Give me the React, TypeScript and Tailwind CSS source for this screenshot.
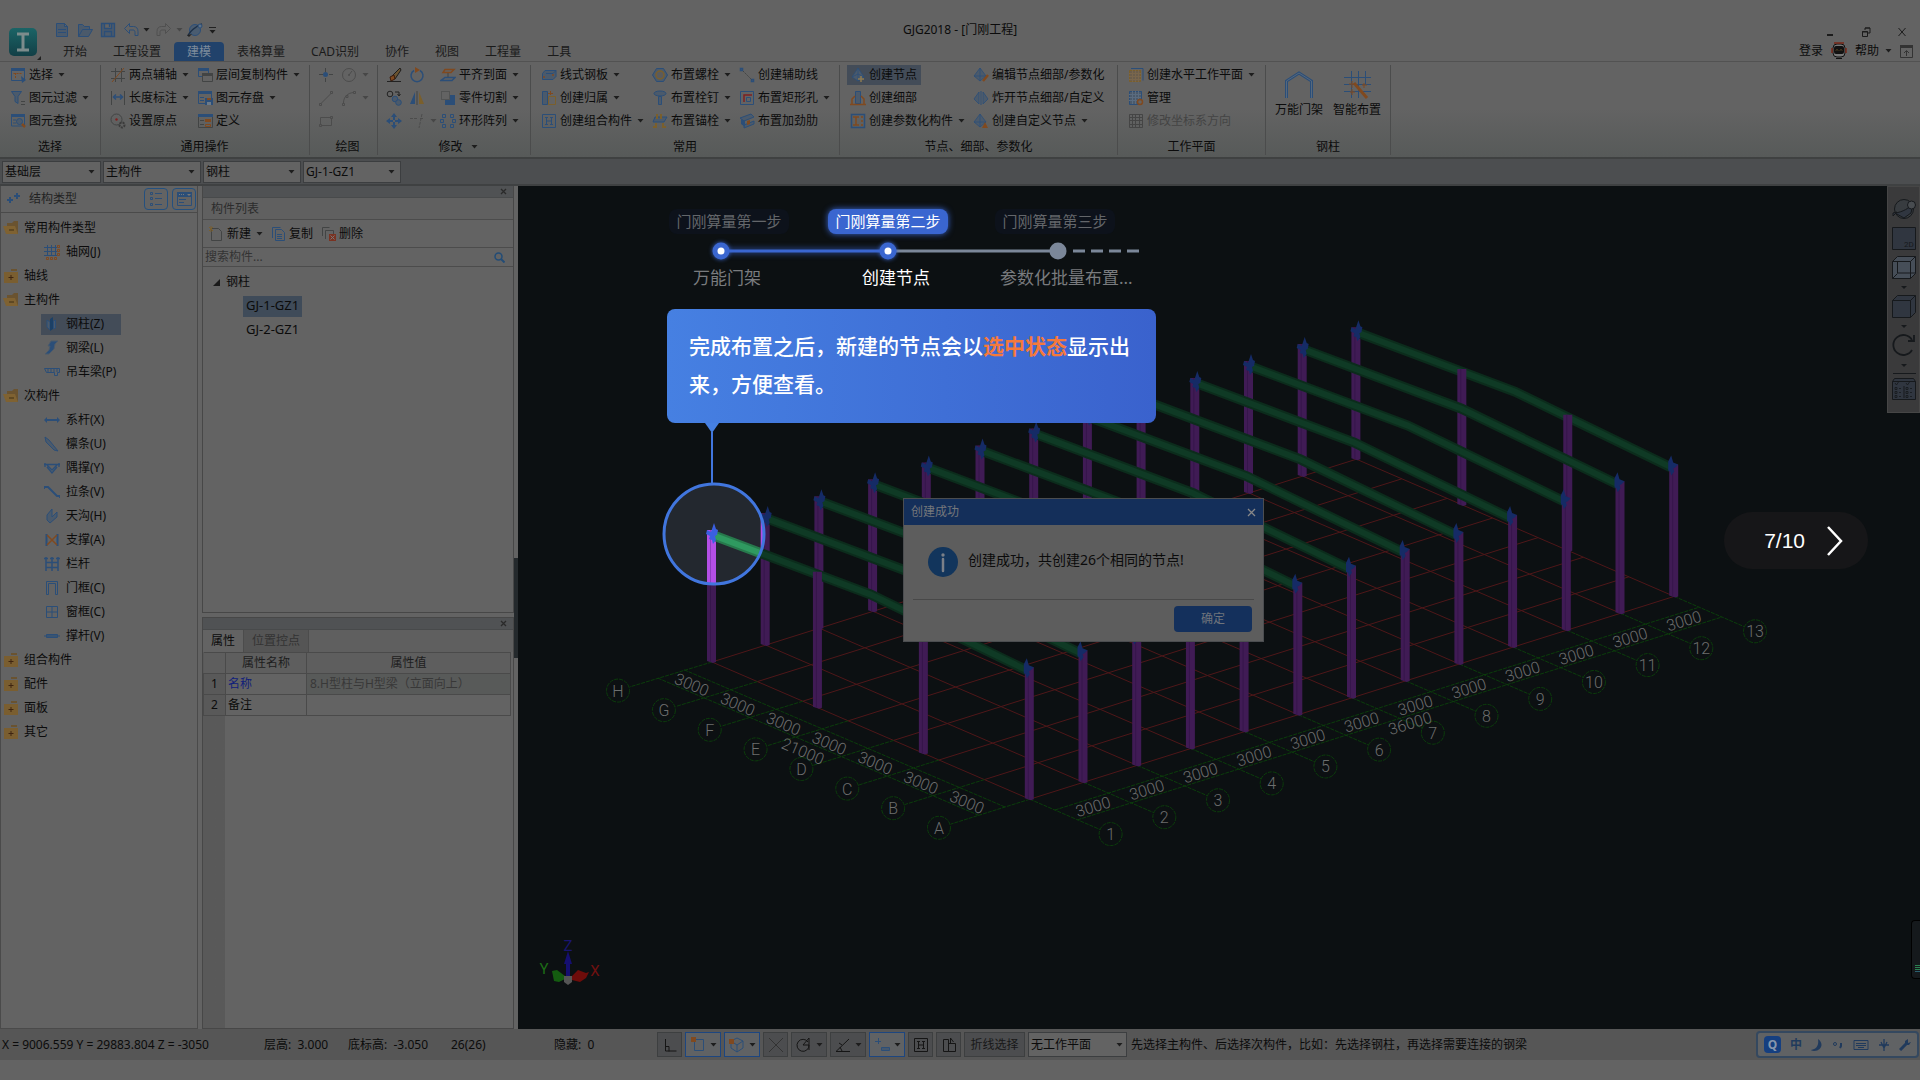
import React from "react";

const B = "#2b4e78";
const L = "#4b5a6b";
const G = "#424444";
const O = "#80491f";
const Y = "#7a5f2c";

const glyphs: Record<string, React.ReactNode> = {
  select: (<><path d="M1.5 1.5h13v12h-13z" fill="none" stroke={B} /><path d="M1 1h14v3H1z" fill={B} /><path d="M3.500 6.500h8M5.500 6v6" stroke={O} strokeDasharray="2 1" /><path d="M11 9l5 4-4 3z" fill={B} /></>),
  filter: (<><path d="M1.500 1.500h10L8 6.500v7l-3-2v-5z" fill={L} stroke={B} /><path d="M11 11.500h4M11 14.500h4" stroke={G} /></>),
  find: (<><path d="M1.500 2h13v11h-13z" fill="none" stroke={B} /><path d="M1 1h14v3H1z" fill={B} /><path d="M3 7h3M3 10h3" stroke={B} /><circle cx="9.500" cy="8.500" r="3" fill={L} stroke={B} /><path d="M12 11l3 3" stroke={O} strokeWidth="2.500" /></>),
  axis2: (<><path d="M5.500 1v14M11.500 1v14M1 4.500h14M1 11.500h14" stroke={G} /><path d="M2 15L14 1" stroke={O} /></>),
  dim: (<><path d="M1.500 1v14M14.500 1v14" stroke={G} /><path d="M3 7h10M6 4.500L3.500 7 6 9.500M10 4.500L12.500 7 10 9.500" fill="none" stroke={B} strokeWidth="1.500" /></>),
  origin: (<><circle cx="6.500" cy="6.500" r="5.500" fill="none" stroke={G} /><circle cx="6.500" cy="6.500" r="1.200" fill="#802020" /><circle cx="12" cy="12" r="2.500" fill="none" stroke="#3b3b3b" strokeWidth="2" strokeDasharray="2 1" /></>),
  layers: (<><path d="M1.500 1.500h10v8h-10z" fill="none" stroke={B} /><path d="M1 1h11v3H1z" fill={B} /><path d="M5.500 6.500h10v8h-10z" fill="#636363" stroke={G} /><path d="M5 6h11v3H5z" fill={G} /></>),
  save: (<><path d="M1.500 1.500h13v12h-13z" fill="none" stroke={B} /><path d="M1 1h14v3H1z" fill={B} /><path d="M3 7.500h4M3 10.500h4" stroke={B} /><path d="M8 8h8v7H8z" fill={B} /><path d="M10 8h4v2h-4z" fill={O} /><path d="M10 12h4v3h-4z" fill="#6d7a88" /></>),
  define: (<><path d="M1.500 1.500h14v13h-14z" fill="none" stroke={G} /><path d="M1 1h15v3H1z" fill={B} /><path d="M3 7.500h4M3 11.500h4" stroke={G} /><path d="M8 6h6v3H8z" fill={O} /><path d="M8.500 11.500h5v2h-5z" fill="none" stroke={O} /></>),
  point: (<><path d="M7.500 1v4M7.500 11v4M1 7.500h4M11 7.500h4" stroke={G} /><circle cx="7.500" cy="7.500" r="2.500" fill={B} /></>),
  circle: (<><circle cx="8" cy="8" r="6.500" fill="none" stroke="#4c4c4c" /><circle cx="8" cy="8" r="1" fill="#4c4c4c" /><path d="M8 8l3-4" stroke="#4c4c4c" /></>),
  line: (<path d="M1.500 13.500h2v2h-2zM12.500 1.500h2v2h-2zM3.500 13L13 3.500" fill="none" stroke="#4c4c4c" />),
  arc: (<path d="M1.500 13.500h2v2h-2zM12.500 1.500h2v2h-2zM5 5.500h2v2H5zM2.500 13c0-6 4-10 10-10.500" fill="none" stroke="#4c4c4c" />),
  rect: (<><path d="M2.500 4.500h11v8h-11z" fill="none" stroke="#4c4c4c" /><path d="M1.500 11.500h2v2h-2zM12.500 3.500h2v2h-2z" fill="#5c5c5c" stroke="#4c4c4c" /></>),
  eraser: (<><path d="M1 14.500h14" stroke="#222" /><path d="M6 9l8-8 1 2-6 9z" fill="#6a5330" stroke="#1c1c1c" /><path d="M4 10l4-2 1 4-4 2z" fill={O} stroke="#3b1c0c" /></>),
  rotate: (<><path d="M5 3.500a6 6 0 1 0 6 0" fill="none" stroke={B} strokeWidth="1.500" /><path d="M6 0l5 3-5 3z" fill={O} /></>),
  copy: (<><circle cx="4" cy="4" r="2.800" fill="none" stroke="#222" /><path d="M9 2h4v3M11.500 4l1.500 2 1.500-2" fill="none" stroke="#222" /><circle cx="9" cy="9" r="2.800" fill={L} stroke={B} /><circle cx="12.500" cy="12.500" r="2.800" fill={L} stroke={B} /></>),
  mirror: (<><path d="M6 2v12H1z" fill={B} /><path d="M10 2v12h5z" fill={Y} /><path d="M8 1v14" stroke={G} /></>),
  move: (<path d="M8 0l3 4H9v3H7V4H5zM8 16l3-4H9V9H7v3H5zM0 8l4-3v2h3v2H4v2zM16 8l-4-3v2H9v2h3v2z" fill={B} />),
  trim: (<path d="M1 5.500h8M11 5.500h4M13 1l-3 14" fill="none" stroke="#4c4c4c" strokeDasharray="3 1" />),
  align: (<><path d="M5 2.500h9l-3 3H3z" fill="none" stroke={O} strokeWidth="1.500" /><path d="M5 10.500h10l-3 3H1z" fill="none" stroke={B} strokeWidth="1.500" /><path d="M8 6v4" stroke={G} /></>),
  cut: (<><path d="M1.500 1.500h8v8h-8z" fill="none" stroke={G} strokeDasharray="1 1" /><path d="M10 5h5v10H5v-5h5z" fill={B} /></>),
  ring: (<path d="M2.500 1.500h3v3h-3zM10.500 1.500h3v3h-3zM.5 6.500h3v3h-3zM12.500 6.500h3v3h-3zM2.500 11.500h3v3h-3zM10.500 11.500h3v3h-3z" fill="none" stroke={B} />),
  plate: (<><path d="M4 3.500h11v6l-3 3H1.500v-6z" fill={L} stroke={B} /><path d="M5 6.500h7l3-3" fill="none" stroke={B} /><circle cx="3" cy="10" r="1" fill={O} /><circle cx="12" cy="8" r="1" fill={O} /></>),
  belong: (<><path d="M1.500 1.500h5v13h-5z" fill={L} stroke={B} /><path d="M7.500 6.500h7v8h-7z" fill="none" stroke={Y} /><path d="M9.500 1v4M12 3.500H7" stroke={O} /></>),
  combo: (<><path d="M1.500 1.500h13v13h-13z" fill="none" stroke={B} /><path d="M4 4.500h3M9 4.500h3M4 11.500h3M9 11.500h3M5.500 4v8M10.500 4v8M5 8h6" stroke={B} /></>),
  bolt: (<><path d="M4.500 1.500h7l4 6.500-4 6.500h-7L.5 8z" fill={L} stroke={B} /><circle cx="8" cy="8" r="4" fill="#5b5b5b" stroke={Y} strokeWidth="1.500" /></>),
  stud: (<><ellipse cx="8" cy="3.500" rx="6" ry="2.500" fill={L} stroke={B} /><path d="M6.500 6.500h3v8h-3z" fill={L} stroke={B} /></>),
  anchor: (<><path d="M3 4h12l-3 5H1z" fill={L} stroke={B} /><path d="M5 1v5M9 1v5M4 10v4H1M11 10v4h3" fill="none" stroke={Y} strokeWidth="2" /></>),
  aux: (<><path d="M1.500 1.500h2v2h-2zM12.500 12.500h2v2h-2z" fill="none" stroke={B} strokeWidth="1.500" /><path d="M4 4l9 9" stroke={G} strokeDasharray="2 1" /></>),
  hole: (<><path d="M1.500 1.500h13v13h-13z" fill="none" stroke={B} /><path d="M5 12V5h8" fill="none" stroke="#802020" strokeWidth="1.500" /><path d="M7.500 7.500h4v4h-4z" fill="none" stroke={B} /></>),
  rib: (<><path d="M1 5l11-4 3 3-10 4zM5 12l10-4v3L5 15z" fill={L} stroke={B} /><path d="M2 6v5l4 3V8z" fill={B} /><path d="M8 8l3-1v4l-3 1z" fill={O} /></>),
  node: (<><path d="M8 1l6 9-6 4-6-4z" fill={L} stroke={B} strokeWidth=".8" /><path d="M8 1v13M2 10l6-3 6 3" fill="none" stroke={B} strokeWidth=".8" /><path d="M11 9v6M8 12h6" stroke="#8c7a52" strokeWidth="1.500" /></>),
  detail: (<><path d="M5.500 1.500h5v12h-5z" fill={L} stroke={B} /><path d="M0 14.500h16M2 14V9l3-3M14 14V9l-3-3" fill="none" stroke={O} strokeWidth="1.500" /></>),
  param: (<><path d="M1.500 1.500h13v13h-13z" fill="none" stroke={B} strokeWidth="1.500" /><path d="M3 4h6M3 12h6M6 4v8M11 4h2M11 8h2M11 12h2" stroke={O} strokeWidth="1.500" /></>),
  nodeEdit: (<><path d="M7 1l6 8-6 5-6-5z" fill={L} stroke={B} strokeWidth=".8" /><path d="M7 1v13M1 9h12" stroke={B} strokeWidth=".8" /><path d="M10 14l5-6" stroke={O} strokeWidth="2.500" /></>),
  nodeBlast: (<><path d="M6 2v12L1 9zM10 2v12l5-5z" fill={L} stroke={B} strokeWidth=".8" /><path d="M8 1v14" stroke={B} /></>),
  nodeCustom: (<><path d="M7 1l6 8-6 5-6-5z" fill={L} stroke={B} strokeWidth=".8" /><path d="M7 1v13M1 9h12" stroke={B} strokeWidth=".8" /><path d="M9 15l3-6 3 6z" fill={O} /></>),
  plane: (<><path d="M3 1.500h12v12" fill="none" stroke={B} /><path d="M1.500 3.500h11v11h-11z" fill="#6a5d4c" stroke={Y} /><path d="M4.500 3v12M7.500 3v12M10.500 3v12M1 6.500h12M1 9.500h12M1 12.500h12" stroke="#79664c" /></>),
  manage: (<><path d="M1.500 1.500h12v13h-12z" fill={L} stroke={B} /><path d="M4.500 1v13M7.500 1v13M10.500 1v13M1 4.500h12M1 7.500h12M1 10.500h12" stroke="#5a6c80" /><circle cx="12" cy="12" r="2.500" fill="#636363" stroke={O} strokeWidth="1.500" /></>),
  grid: (<path d="M1.500 1.500h13v13h-13zM4.500 1v14M7.500 1v14M11.500 1v14M1 4.500h14M1 7.500h14M1 11.500h14" fill="none" stroke="#454545" />),
  new: (<><path d="M2.500 1.500h8l3 3v10h-11zM10.500 1.500v3h3" fill={L} stroke={B} /><path d="M4 7.500h8M4 10.500h8" stroke={B} /></>),
  open: (<path d="M1.500 14.500v-12h4l2 2h5v3M1.500 14.500l4-7h10l-4 7z" fill={L} stroke={B} />),
  disk: (<path d="M1.500 1.500h13v13h-13zM4.500 1.500v5h7v-5M4.500 14.500v-5h7v5M9.500 2v3" fill={L} stroke={B} strokeWidth="1.300" />),
  undo: (<path d="M1.500 6.500l5-5v3h4c3 0 4.500 2 4.500 5v4h-3v-3c0-1.500-.5-2.500-2-2.500H6.500v3.500z" fill="none" stroke={B} />),
  redo: (<path d="M14.500 6.500l-5-5v3h-4c-3 0-4.500 2-4.500 5v4h3v-3c0-1.500.5-2.500 2-2.500h3.500v3.500z" fill="none" stroke="#505050" />),
  planet: (<><circle cx="8" cy="8" r="5.500" fill="#4a5c70" stroke={B} /><path d="M1 14c1-4 8-10 14-12" fill="none" stroke="#1d3048" strokeWidth="1.500" /><circle cx="13" cy="4" r="2" fill="#5f7185" stroke={B} /><path d="M0 13l5-1-3 3z" fill="#222" /></>),
  folderOpen: (<><path d="M4 3h5l2-2h4v13H4z" fill="#6a5330" /><path d="M0 6h12l3 8H3z" fill="#7f6232" /><path d="M6 10h5" stroke="#3f2f14" /></>),
  folder: (<><path d="M8 1h6v2H8z" fill="#6a5330" /><path d="M1 4h14v11H1z" fill="#7a5e30" /><path d="M5.500 9.500h5M8 7v5" stroke="#3f2410" /></>),
  axes: (<><path d="M3.500 1v11M7.500 1v11M11.500 1v11M0 3.500h13M0 7.500h13M0 11.500h13" stroke={B} /><path d="M13.500 1.500h2v2h-2zM13.500 5.500h2v2h-2zM13.500 9.500h2v2h-2zM2.500 13.500h2v2h-2zM6.500 13.500h2v2h-2zM10.500 13.500h2v2h-2z" fill="none" stroke={O} /></>),
  column: (<><path d="M3 4l3 2v8l-3-3z" fill={L} stroke={B} /><path d="M6 3l3-2v12l-3 2z" fill="#1c4066" /><path d="M9.500 5l2-1v8l-2 1z" fill={L} stroke={B} /></>),
  beam: (<path d="M7 1h7l-3 3-1 5-5 5H1l4-4 1-4H4z" fill={B} stroke={L} />),
  crane: (<path d="M.5 4.500h15v4h-2v3h-3v-3h-8zM4 5v3M7 5v3M10 5v3M13 5v3" fill="none" stroke={B} />),
  tie: (<path d="M0 8l3-3v2h10V5l3 3-3 3V9H3v2z" fill={B} />),
  purlin: (<path d="M1 1l4 3 9 11-4-1L2 6z" fill={L} stroke={B} />),
  knee: (<path d="M0 4.500h16M1 3v4M15 3v4M3 5l5 5 5-5M3 7l5 6 5-6" fill="none" stroke={B} strokeWidth="1.300" />),
  rod: (<path d="M0 3h4l9 9h3M0 2v3M16 11v3" fill="none" stroke={B} strokeWidth="2" />),
  gutter: (<path d="M3 7l5-6v8l5-5v5l-7 6-3-3z" fill={L} stroke={B} />),
  brace: (<><path d="M2.500 2v12M13.500 2v12" stroke={B} strokeWidth="2" /><path d="M3 3l10 10M13 3L3 13" stroke={O} strokeWidth="1.500" /></>),
  fence: (<path d="M2 1v14M8 1v14M14 1v14M0 2.500h4M6 2.500h4M12 2.500h4M2 6.500h12M2 11.500h12" stroke={B} strokeWidth="1.500" />),
  door: (<path d="M2.500 14.500v-13h11v13h-2v-11h-7v11z" fill="none" stroke={B} />),
  window: (<path d="M2.500 2.500h11v11h-11zM8 2v12M2 8h12" fill="none" stroke={B} />),
  strut: (<path d="M0 8h16M2.500 6.500h11v3h-11z" fill={L} stroke={B} />),
  doc: (<><path d="M3.500 2.500h7l3 3v9h-10z" fill="none" stroke={G} /><path d="M1 1l4 4M5 1L1 5M3 0v6" stroke={Y} /></>),
  docs: (<><path d="M1.500 12V1.500h8" fill="none" stroke={B} /><path d="M4.500 3.500h6l3 3v8h-9zM6 8.500h5M6 10.500h5M6 12.500h5" fill="none" stroke={B} /></>),
  docDel: (<><path d="M1.500 10V1.500h7M4.500 13V4.500h8V8" fill="none" stroke={G} /><path d="M8 8h7v7H8z" fill="#7a3322" /><path d="M9.500 9.500l4 4M13.500 9.500l-4 4" stroke="#777" /></>),
};

function Icon({ name, size = "size-4" }: { name: string; size?: string }) {
  return (
    <svg viewBox="0 0 16 16" className={`${size} shrink-0`} aria-hidden="true">
      {glyphs[name]}
    </svg>
  );
}

function Caret({ dim = false }: { dim?: boolean }) {
  return (
    <svg viewBox="0 0 7 4" className={`h-1 w-[7px] shrink-0 ${dim ? "text-[#474747]" : "text-[#1d1d1d]"}`} aria-hidden="true">
      <path d="M.5 0h6l-3 3.500z" fill="currentColor" />
    </svg>
  );
}

type Tool = { icon: string; text?: string; caret?: boolean; active?: boolean; off?: boolean };

function ToolButton({ t }: { t: Tool }) {
  return (
    <button
      type="button"
      aria-label={t.text ?? t.icon}
      className={`-ml-[3px] flex h-5 items-center whitespace-nowrap pl-[3px] pr-1 ${t.active ? "bg-[#434c58]" : ""} ${t.off ? "text-[#444]" : ""}`}
    >
      <Icon name={t.icon} />
      {t.text && <span className="ml-[3px]">{t.text}</span>}
      {t.caret && <span className="-mr-1 ml-[5px] flex"><Caret dim={!t.text} /></span>}
    </button>
  );
}

type GroupProps = { label: string; columns: Tool[][]; caret?: boolean; className?: string; gap?: string };

function Group({ label, columns, caret, className = "px-2.5", gap = "gap-2" }: GroupProps) {
  return (
    <section className={`flex shrink-0 flex-col border-r border-[#4b4c4c] ${className}`}>
      <div className={`flex ${gap}`}>
        {columns.map((c, i) => (
          <div key={i} className="flex flex-col items-start gap-[3px]">
            {c.map((t, j) => <ToolButton key={j} t={t} />)}
          </div>
        ))}
      </div>
      <h2 className="mt-auto flex items-center justify-center gap-2">{label}{caret && <Caret />}</h2>
    </section>
  );
}

const T = (icon: string, text?: string, caret?: boolean): Tool => ({ icon, text, caret });

const leftGroups: GroupProps[] = [
  { label: "选择", className: "w-[101px] px-2.5", columns: [[T("select", "选择", true), T("filter", "图元过滤", true), T("find", "图元查找")]] },
  { label: "通用操作", className: "w-[209px] pl-[9px] pr-2.5", columns: [[T("axis2", "两点辅轴", true), T("dim", "长度标注", true), T("origin", "设置原点")], [T("layers", "层间复制构件", true), T("save", "图元存盘", true), T("define", "定义")]] },
  { label: "绘图", className: "w-[68px] pl-2", gap: "gap-[3px]", columns: [[T("point"), T("line"), T("rect")], [T("circle", undefined, true), T("arc", undefined, true)]] },
  { label: "修改", className: "w-[153px] pl-2", gap: "gap-[3px]", caret: true, columns: [[T("eraser"), T("copy"), T("move")], [T("rotate"), T("mirror"), T("trim", undefined, true)], [T("align", "平齐到面", true), T("cut", "零件切割", true), T("ring", "环形阵列", true)]] },
  { label: "常用", className: "w-[309px] px-2.5", columns: [[T("plate", "线式钢板", true), T("belong", "创建归属", true), T("combo", "创建组合构件", true)], [T("bolt", "布置螺栓", true), T("stud", "布置栓钉", true), T("anchor", "布置锚栓", true)], [T("aux", "创建辅助线"), T("hole", "布置矩形孔", true), T("rib", "布置加劲肋")]] },
  { label: "节点、细部、参数化", className: "w-[278px] px-2.5", columns: [[{ icon: "node", text: "创建节点", active: true }, T("detail", "创建细部"), T("param", "创建参数化构件", true)], [T("nodeEdit", "编辑节点细部/参数化"), T("nodeBlast", "炸开节点细部/自定义"), T("nodeCustom", "创建自定义节点", true)]] },
  { label: "工作平面", className: "w-[148px] px-2.5", columns: [[T("plane", "创建水平工作平面", true), T("manage", "管理"), { icon: "grid", text: "修改坐标系方向", off: true }]] },
];

const tabs = ["开始", "工程设置", "建模", "表格算量", "CAD识别", "协作", "视图", "工程量", "工具"];

function Header() {
  return (
    <header className="grid grid-cols-[50px_1fr] grid-rows-[42px_19px] border-b border-[#525252]">
      <div className="row-span-2 flex items-end pl-2">
        <svg viewBox="0 0 34 34" className="size-[34px]" aria-label="GJG">
          <defs><linearGradient id="lg" x2="0" y2="1"><stop stopColor="#1b6466" /><stop offset="1" stopColor="#123f46" /></linearGradient></defs>
          <rect x="1" y="1" width="28" height="28" rx="5" fill="url(#lg)" />
          <path d="M9 7h12M9 23h12M15 7v16" stroke="#7c8c8c" strokeWidth="3" />
          <path d="M33 29v4h-4z" fill="#222" />
        </svg>
      </div>
      <div className="grid grid-cols-[1fr_auto_1fr] items-end pb-1">
        <nav className="flex items-center gap-[7px] pl-[4px]" aria-label="快速访问">
          <Icon name="new" /><Icon name="open" /><Icon name="disk" />
          <span className="flex items-center gap-1"><Icon name="undo" /><Caret /></span>
          <span className="-ml-px flex items-center gap-1"><Icon name="redo" /><Caret dim /></span>
          <span className="-ml-[3px] flex items-center gap-1.5"><Icon name="planet" /><span className="border-t border-[#222] pt-0.5"><Caret /></span></span>
        </nav>
        <h1 className="mr-[50px] text-[12px] leading-4">GJG2018 - [门刚工程]</h1>
        <div className="flex items-center justify-end gap-6 pr-3 text-[#1c1c1c]">
          <button type="button" aria-label="最小化" className="flex h-3 w-3 items-center justify-center pt-1.5"><span className="h-0.5 w-1.5 bg-[#1c1c1c]" /></button>
          <button type="button" aria-label="还原"><svg viewBox="0 0 12 12" className="size-3"><path d="M2.500 5.500h5v5h-5zM5 4V2h5v5H8M2 6h6M5 2h5" fill="none" stroke="currentColor" /></svg></button>
          <button type="button" aria-label="关闭"><svg viewBox="0 0 12 12" className="size-3"><path d="M2.500 2l7 8M9.500 2l-7 8" stroke="currentColor" /></svg></button>
        </div>
      </div>
      <div className="flex items-start">
        {tabs.map((t) => (
          <button key={t} type="button" className={`h-full px-[13px] leading-[18px] ${t === "建模" ? "rounded-t-sm bg-[#21426b] text-[#7e8b9b]" : "text-[#1a1a1a]"}`}>{t}</button>
        ))}
        <div className="ml-auto flex items-center gap-2 pr-[7px] leading-[18px]">
          <button type="button">登录</button>
          <svg viewBox="0 0 16 18" className="h-[18px] w-4" aria-hidden="true">
            <rect x="2" y="2" width="12" height="13" rx="4" fill="#777" stroke="#111" /><rect x="3" y="4" width="10" height="8" rx="2" fill="#111" />
            <path d="M5 8.500l1-1 1 1M9 8.500l1-1 1 1" fill="none" stroke={Y} /><path d="M3 1h10M1 6v5M15 6v5" stroke="#7a2818" strokeWidth="1.500" /><path d="M5 16.500h6" stroke="#111" />
          </svg>
          <button type="button" className="flex items-center gap-1.5">帮助<Caret /></button>
          <svg viewBox="0 0 13 13" className="size-[13px]" aria-hidden="true"><path d="M.5.5h12v12H.5zM6.500 11V6M4 8l2.500-2.500L9 8" fill="none" stroke="#333" /><path d="M0 0h13v3H0z" fill="#333" /></svg>
        </div>
      </div>
    </header>
  );
}

function Ribbon() {
  return (
    <div className="flex h-[97px] border-b-2 border-[#3f4141] bg-linear-to-b from-[#636363] from-50% to-[#575a59] pb-[2px] pt-[3px]">
      {leftGroups.map((g) => <Group key={g.label} {...g} />)}
      <section className="flex flex-col border-r border-[#4b4c4c] px-[9px]">
        <div className="flex gap-2.5 pt-[5px]">
          <button type="button" className="flex flex-col items-center">
            <svg viewBox="0 0 30 30" className="size-[30px]"><path d="M2.500 28V11L15 3l12.500 8v17" fill="none" stroke={B} strokeWidth="3" /><path d="M2.500 28V11L15 3l12.500 8v17" fill="none" stroke="#56687d" /></svg>
            <span className="leading-5">万能门架</span>
          </button>
          <button type="button" className="flex flex-col items-center">
            <svg viewBox="0 0 30 30" className="size-[30px]"><path d="M9.500 1v27M16.500 1v27M23.500 1v14M2 7.500h27M2 14.500h27M2 21.500h27" stroke={B} /><path d="M12 13l13 15" stroke={O} strokeWidth="3" /><path d="M10 11v7M7 14h7M20 15h5M22 13v5M8 22h5M10 19v6" stroke={O} /></svg>
            <span className="leading-5">智能布置</span>
          </button>
        </div>
        <h2 className="mt-auto text-center">钢柱</h2>
      </section>
    </div>
  );
}

function Combo({ label, value, className = "", caretBox = "right-1.5" }: { label: string; value: string; className?: string; caretBox?: string }) {
  return (
    <span className={`relative inline-flex items-center ${className}`}>
      <select aria-label={label} defaultValue={value} className="size-full appearance-none border border-[#3c3e40] bg-[#636363] pl-0.5 text-[12px] outline-none">
        <option>{value}</option>
      </select>
      <span className={`pointer-events-none absolute ${caretBox}`}><Caret /></span>
    </span>
  );
}

type Row = { icon: string; text: string; child?: boolean; active?: boolean };
const c = (icon: string, text: string, active?: boolean): Row => ({ icon, text, child: true, active });
const typeRows: Row[] = [
  { icon: "folderOpen", text: "常用构件类型" }, c("axes", "轴网(J)"), { icon: "folder", text: "轴线" },
  { icon: "folderOpen", text: "主构件" }, c("column", "钢柱(Z)", true), c("beam", "钢梁(L)"), c("crane", "吊车梁(P)"),
  { icon: "folderOpen", text: "次构件" }, c("tie", "系杆(X)"), c("purlin", "檩条(U)"), c("knee", "隅撑(Y)"), c("rod", "拉条(V)"),
  c("gutter", "天沟(H)"), c("brace", "支撑(A)"), c("fence", "栏杆"), c("door", "门框(C)"), c("window", "窗框(C)"), c("strut", "撑杆(V)"),
  { icon: "folder", text: "组合构件" }, { icon: "folder", text: "配件" }, { icon: "folder", text: "面板" }, { icon: "folder", text: "其它" },
];

function TypePanel() {
  return (
    <aside className="flex w-[198px] shrink-0 flex-col border border-t-0 border-[#4a4a4a]">
      <div className="flex h-[27px] items-center border-b border-[#4a4a4a] pl-[6px]">
        <svg viewBox="0 0 14 14" className="size-3.5"><path d="M3 5v6M0 8h6M10 1v6M7 4h6" stroke={B} strokeWidth="2" /></svg>
        <h2 className="ml-2 text-[#222]">结构类型</h2>
        <button type="button" aria-label="列表" className="ml-auto flex h-[22px] w-6 items-center justify-center rounded-sm border border-[#24507f]">
          <svg viewBox="0 0 14 14" className="size-3.5"><path d="M1.500.5h2v2h-2zM1.500 5.500h2v2h-2zM1.500 11.500h2v2h-2zM6 1.500h7M6 6.500h7M6 12.500h7" fill="none" stroke={B} /></svg>
        </button>
        <button type="button" aria-label="面板" className="ml-1 mr-px flex h-[22px] w-6 items-center justify-center rounded-sm border border-[#24507f]">
          <svg viewBox="0 0 15 14" className="h-3.5 w-[15px]"><path d="M.5.5h14v13H.5z" fill="none" stroke={B} /><path d="M0 0h15v5H0z" fill={B} /><path d="M2 7.500h7M2 10.500h5" stroke={B} /><path d="M10 2h4l-2 2z" fill="#777" /><path d="M2 2.500h5" stroke="#777" strokeDasharray="1 1" /></svg>
        </button>
      </div>
      <ul className="pt-[3px]">
        {typeRows.map((r) => (
          <li key={r.text} className={`flex h-6 items-center ${r.child ? "pl-10" : "pl-0.5"}`}>
            <button type="button" className={`flex h-[21px] items-center ${r.child ? "w-20 gap-1.5 pl-[3px]" : "gap-[5px]"} ${r.active ? "bg-[#434c58]" : ""}`}>
              <Icon name={r.icon} />{r.text}
            </button>
          </li>
        ))}
      </ul>
    </aside>
  );
}

function Strip() {
  return (
    <div className="flex h-3 items-center justify-end border-b border-[#484a4b] bg-[#505254] pr-1.5">
      <button type="button" aria-label="关闭面板"><svg viewBox="0 0 7 7" className="size-[7px]"><path d="M1 1l5 5M6 1L1 6" stroke="#2a2a2a" strokeWidth="1.300" /></svg></button>
    </div>
  );
}

function ListPanels() {
  return (
    <div className="ml-1 flex w-[312px] shrink-0 flex-col">
      <section className="flex h-[427px] flex-col border border-t-0 border-[#474747]">
        <Strip />
        <h2 className="flex h-[22px] items-center border-b border-[#4c4c4c] bg-[#606060] pl-2 text-[#2c2c2c]">构件列表</h2>
        <div className="flex h-7 items-center border-b border-[#4c4c4c] pl-[5px]">
          <button type="button" className="flex items-center gap-[3px]"><Icon name="doc" />新建<span className="ml-0.5"><Caret /></span></button>
          <button type="button" className="ml-2 flex items-center gap-0.5"><Icon name="docs" />复制</button>
          <button type="button" className="ml-2 flex items-center gap-0.5"><Icon name="docDel" />删除</button>
        </div>
        <label className="flex h-[19px] items-center border-b border-[#4c4c4c] pr-2">
          <input aria-label="搜索构件" placeholder="搜索构件..." className="min-w-0 flex-1 bg-transparent pl-0.5 text-[12px] outline-none placeholder:text-[#333]" />
          <svg viewBox="0 0 11 11" className="size-[11px]"><circle cx="4.500" cy="4.500" r="3.500" fill="none" stroke="#234c76" strokeWidth="1.500" /><path d="M7 7l3.500 3.500" stroke="#234c76" strokeWidth="2" /></svg>
        </label>
        <ul className="pt-[3px]">
          <li className="flex h-6 items-center gap-1.5 pl-2.5"><svg viewBox="0 0 7 7" className="size-[7px]"><path d="M7 0v7H0z" fill="#1a1a1a" /></svg>钢柱</li>
          <li className="flex h-6 items-center pl-10"><button type="button" className="h-[21px] bg-[#3f4b59] px-[3px] pb-0.5 text-[13px] leading-[18px]">GJ-1-GZ1</button></li>
          <li className="flex h-6 items-center pl-10"><button type="button" className="h-[21px] px-[3px] pb-0.5 text-[13px] leading-[18px]">GJ-2-GZ1</button></li>
        </ul>
      </section>
      <section className="mt-1 flex flex-1 flex-col border border-[#474747]">
        <Strip />
        <div className="flex h-[22px] items-stretch bg-[#5f5f5f]">
          <button type="button" className="bg-[#636363] px-2">属性</button>
          <button type="button" className="border-x border-[#4c4c4c] bg-[#555] px-2 text-[#333]">位置控点</button>
        </div>
        <div className="flex-1 bg-linear-to-r from-[#595959] from-[22px] to-[#636363] to-[22px]">
          <table className="w-[308px] table-fixed border-collapse border-y border-[#4a4a4a] text-left">
            <colgroup><col className="w-[22px]" /><col className="w-[81px]" /><col /></colgroup>
            <thead><tr className="h-[21px] bg-[#5e5e5e] text-[#1d1d1d]"><th /><th className="border border-[#4a4a4a] text-center font-normal">属性名称</th><th className="border border-[#4a4a4a] text-center font-normal">属性值</th></tr></thead>
            <tbody>
              <tr className="h-[21px]"><td className="border border-[#4a4a4a] bg-[#595959] text-center">1</td><td className="border border-[#4a4a4a] pl-[2px] text-[#10207a]">名称</td><td className="whitespace-nowrap border border-[#4a4a4a] bg-[#585a59] pl-[3px] text-[#383838]">8.H型柱与H型梁（立面向上）</td></tr>
              <tr className="h-[21px]"><td className="border border-[#4a4a4a] bg-[#595959] text-center">2</td><td className="border border-[#4a4a4a] pl-[2px]">备注</td><td className="border border-[#4a4a4a]" /></tr>
            </tbody>
          </table>
        </div>
      </section>
    </div>
  );
}

/* Parallel projection of the portal-frame model: u runs along numbered axes, v from axis H to axis A. */
const U = [53.7, -16.9];
const V = [45.4, 19.6];
const pt = (u: number, v: number, z = 0): [number, number] => [712 + u * U[0] + v * V[0], 662 + u * U[1] + v * V[1] - z];
const P = (p: [number, number]) => `${p[0].toFixed(1)},${p[1].toFixed(1)}`;

type Palette = { col: string; colEdge: string; beam: string; beamEdge: string; node: string };
const dark: Palette = { col: "#401b55", colEdge: "#35164a", beam: "#0f3a25", beamEdge: "#0c2c1c", node: "#152b66" };
const bright: Palette = { col: "#b44fe6", colEdge: "#8f3fc0", beam: "#2f9a60", beamEdge: "#27794c", node: "#3a5fe0" };

function Column({ u, v, h, p }: { u: number; v: number; h: number; p: Palette }) {
  const [x, y] = pt(u, v);
  return (
    <g>
      <path d={`M${x - 5} ${y - h}h9v${h}l-3 1-6-2z`} fill={p.col} />
      <path d={`M${x - 1.5} ${y - h}v${h}`} stroke={p.colEdge} strokeWidth="1" />
    </g>
  );
}

function Frames({ p }: { p: Palette }) {
  return (
    <>
      {Array.from({ length: 13 }, (_, i) => 12 - i).map((u) => {
        const h = pt(u, 0, 132), a = pt(u, 7, 132), m = pt(u, 3.5, 138);
        const d = `M${h[0] + 3} ${h[1] + 6}L${m[0]} ${m[1] + 2}L${a[0] - 3} ${a[1] + 3}`;
        return (
          <g key={u}>
            <Column u={u} v={0} h={132} p={p} />
            <path d={d} fill="none" stroke={p.beamEdge} strokeWidth="10" />
            <path d={d} fill="none" stroke={p.beam} strokeWidth="6" />
            {(u === 0 || u === 12) && <><Column u={u} v={7 / 3} h={136} p={p} /><Column u={u} v={14 / 3} h={136} p={p} /></>}
            <Column u={u} v={7} h={132} p={p} />
            <path transform={`translate(${h[0]} ${h[1]})`} d="M2-7l2 6 2 1-1 5-2 1 1 4-3 4-1-4-3-1 1-3-4-2 1-4 4 2z" fill={p.node} />
            <path transform={`translate(${a[0]} ${a[1]})`} d="M-3-9l2 7 5 2-3 3-2 1 1 3-3 4-1-4-2-1 0-9z" fill={p.node} />
          </g>
        );
      })}
    </>
  );
}

function Dashed({ a, b }: { a: [number, number]; b: [number, number] }) {
  return <path d={`M${P(a)}L${P(b)}`} stroke="#0b3d0b" strokeDasharray="4 1" />;
}

function Model() {
  const us = Array.from({ length: 13 }, (_, i) => i);
  const vs = Array.from({ length: 8 }, (_, i) => i);
  /* The dimension band beside the lettered axes is slightly wider than the floor grid. */
  const band = (u: number, v: number): [number, number] => { const q = pt(u, v); return [q[0] + v * 0.45, q[1] - 1]; };
  const circleAt = (x: number, y: number, s: string) => (
    <g key={s}>
      <circle cx={x} cy={y} r="11.500" fill="none" stroke="#0b3d0b" strokeDasharray="4 1" />
      <text x={x} y={y + 6} textAnchor="middle">{s}</text>
    </g>
  );
  const dimText = (x: number, y: number, angle: number, s: string) => (
    <text key={`${s}${x}`} transform={`translate(${x} ${y}) rotate(${angle})`} y="6" textAnchor="middle">{s}</text>
  );
  return (
    <svg viewBox="518 186 1402 843" preserveAspectRatio="xMinYMin slice" className="absolute inset-0 size-full" aria-label="门刚三维模型">
      <defs><clipPath id="lens"><circle cx="714" cy="534" r="50" /></clipPath></defs>
      <g stroke="#4f1719">
        {vs.map((v) => <path key={v} d={`M${P(pt(0, v))}L${P(pt(12, v))}`} />)}
        {us.map((u) => <path key={u} d={`M${P(pt(u, 0))}L${P(pt(u, 7))}`} />)}
      </g>
      {vs.map((v) => <Dashed key={v} a={pt(0, v)} b={band(-1.53, v)} />)}
      {us.map((u) => <Dashed key={u} a={pt(u, 7)} b={pt(u, 8.550)} />)}
      <Dashed a={band(-0.52, 0)} b={band(-0.52, 7)} /><Dashed a={band(-1.01, 0)} b={band(-1.01, 7)} />
      <Dashed a={pt(0, 7.550)} b={pt(12, 7.550)} /><Dashed a={pt(0, 8.050)} b={pt(12, 8.050)} />
      <g fill="#6c6e6e" className="font-[Roboto] text-[16px] font-light">
        {vs.map((v) => { const q = band(-1.75, v); return circleAt(q[0], q[1], "HGFEDCBA"[v]); })}
        {us.map((u) => { const q = pt(u, 8.780); return circleAt(q[0], q[1], String(u + 1)); })}
        {vs.slice(0, 7).map((v) => { const q = band(-0.800, v + 0.500); return dimText(q[0], q[1], 23, "3000"); })}
        {us.slice(0, 12).map((u) => { const q = pt(u + 0.500, 7.800); return dimText(q[0], q[1], -17, "3000"); })}
        {dimText(803, 751, 23, "21000")}
        {dimText(1410, 723, -17, "36000")}
      </g>
      <Frames p={dark} />
      <g clipPath="url(#lens)"><rect x="660" y="480" width="110" height="110" fill="#23282f" /><Frames p={bright} /></g>
      <circle cx="714" cy="534" r="50" fill="none" stroke="#4176de" strokeWidth="3" />
      <path d="M712 432v52" stroke="#4176de" strokeWidth="2" />
      <path d="M705 423h14l-7 10z" fill="#4680e2" />
      <g>
        <path d="M568 951l4 13h-2v14h-4v-14h-2z" fill="#150f70" />
        <path d="M565 976l-8-6-5 1 2 10 5 1 6-3z" fill="#145c10" />
        <path d="M572 976l6-6 8 3 3-1-3 6-6 4-8-2z" fill="#6e0c0a" />
        <path d="M564 976h8v6l-4 3-4-3z" fill="#555" />
        <g className="font-[Roboto] text-[15px]" textAnchor="middle"><text x="568" y="951" fill="#1a1570">Z</text><text x="544" y="974" fill="#1d6b16">Y</text><text x="595" y="976" fill="#701010">X</text></g>
      </g>
    </svg>
  );
}

function Steps() {
  return (
    <div className="absolute left-[151px] top-[23px] w-[475px]">
      <div className="flex text-[15px] leading-[25px] text-[#63666a]">
        <span className="w-[120px] rounded-lg bg-[#0d121b] text-center">门刚算量第一步</span>
        <span className="ml-[39px] w-[120px] rounded-lg bg-[#3a66d0] text-center text-white shadow-[0_0_6px_#3a66d0]">门刚算量第二步</span>
        <span className="ml-[47px] w-[120px] rounded-lg bg-[#0d121b] text-center">门刚算量第三步</span>
      </div>
      <svg viewBox="0 0 475 34" className="h-[34px] w-full" aria-hidden="true">
        <path d="M52 17h167" stroke="#3a66d0" strokeWidth="3" className="drop-shadow-[0_0_3px_#3a66d0]" />
        <path d="M219 17h170" stroke="#7b8799" strokeWidth="3" />
        <path d="M404 17h68" stroke="#7b8799" strokeWidth="3" strokeDasharray="12 6" />
        <g className="drop-shadow-[0_0_2px_#3a66d0]"><circle cx="52" cy="17" r="8.500" fill="#3a66d0" /><circle cx="219" cy="17" r="8.500" fill="#3a66d0" /></g>
        <circle cx="52" cy="17" r="3.500" fill="#fff" /><circle cx="219" cy="17" r="3.500" fill="#fff" />
        <circle cx="389" cy="17" r="8.500" fill="#7b8799" />
      </svg>
      <div className="flex whitespace-nowrap pl-6 text-[17px] leading-5 text-[#797b7e]">
        <span className="w-[169px]">万能门架</span><span className="w-[138px] text-white">创建节点</span><span>参数化批量布置...</span>
      </div>
    </div>
  );
}

function Viewport() {
  return (
    <main className="relative min-w-0 flex-1 overflow-hidden bg-[#0c1012]">
      <Model />
      <section role="dialog" aria-label="创建成功" className="absolute left-[385px] top-[312px] w-[361px] border border-[#4b4d50] bg-[#5d5d5d]">
        <div className="flex h-[26px] items-center justify-between bg-[#142f5a] px-[7px] text-[#74777b]">
          <h2>创建成功</h2>
          <button type="button" aria-label="关闭"><svg viewBox="0 0 9 9" className="size-[9px]"><path d="M1 1l7 7M8 1L1 8" stroke="#888" strokeWidth="1.300" /></svg></button>
        </div>
        <div className="mx-[9px] flex h-[75px] items-center border-b border-[#484848] pl-[15px] text-[14px]">
          <svg viewBox="0 0 30 30" className="size-[30px]"><circle cx="15" cy="15" r="15" fill="#12355c" /><path d="M15 12v12" stroke="#7b8088" strokeWidth="2.500" strokeLinecap="round" /><circle cx="15" cy="8" r="1.700" fill="#7b8088" /></svg>
          <p className="ml-2.5 pb-1">创建成功，共创建26个相同的节点!</p>
        </div>
        <div className="flex justify-end pb-[9px] pr-[11px] pt-[6px]"><button type="button" className="h-[26px] w-[78px] rounded-sm bg-[#14305c] text-[#6f747b]">确定</button></div>
      </section>
      <Steps />
      <p className="absolute left-[149px] top-[123px] w-[489px] rounded-lg bg-linear-to-r from-[#4680e2] to-[#3a62cd] px-[22px] pb-5 pt-[18px] text-[21px] font-medium leading-[38px] text-white">
        完成布置之后，新建的节点会以<strong className="font-bold text-[#f5793b]">选中状态</strong>显示出<br />来，方便查看。
      </p>
      <nav className="absolute right-[52px] top-[326px] flex h-[57px] w-36 items-center justify-end gap-[21px] rounded-full bg-[#161618] pr-[25px] font-['Liberation_Sans',sans-serif] text-[21px] text-white">
        <span>7/10</span>
        <button type="button" aria-label="下一步"><svg viewBox="0 0 17 32" className="h-8 w-[17px]"><path d="M2 2l13 14L2 30" fill="none" stroke="#fff" strokeWidth="2.500" /></svg></button>
      </nav>
      <div className="absolute right-0 top-0 flex h-[227px] w-[33px] flex-col items-center border border-[#464646] bg-[#3a3a3b] pt-[9px]">
        <svg viewBox="0 0 24 204" className="h-[204px] w-6" stroke="#16191c" fill="#303640">
          <circle cx="12" cy="13" r="9.500" fill="#383c40" /><path d="M3 17c8-1 14-5 18-9l-2 9-7 5z" /><circle cx="19.500" cy="9" r="4" fill="#484c50" /><path d="M1 20l4-4-4 1z" />
          <path d="M.5 31.500h23v22H.5z" />
          <path d="M.5 65.500l5-5h18v17l-5 5H.5z" fill="#464e58" /><path d="M.5 65.500h18v17M18.500 65.500l5-5M5.500 66v11h18M5.500 77.500l-5 5" fill="none" />
          <path d="M9 90h6l-3 3z" fill="#16191c" stroke="none" />
          <path d="M.5 104.500l5-5h18v17l-5 5H.5z" /><path d="M.5 104.500h18v17M18.500 104.500l5-5" fill="none" />
          <path d="M9 129h6l-3 3z" fill="#16191c" stroke="none" />
          <path d="M20 154a10 10 0 1 1 0-10M22 139v6h-6" fill="none" strokeWidth="1.800" />
          <path d="M9 168h6l-3 3z" fill="#16191c" stroke="none" /><path d="M1 177.500h23" />
          <path d="M.5 185.500l2-3h19l2 3v18H.5zM.5 185.500h23M12 190v12" /><path d="M3 187l1.500 2 2-3M14 187l1.500 2 2-3M3 191.500h2v2H3zM3 195.500h2v2H3zM3 199.500h2v2H3zM14 191.500h2v2h-2zM14 195.500h2v2h-2zM14 199.500h2v2h-2zM7 192.500h2M7 196.500h2M7 200.500h2M18 192.500h2M18 196.500h2M18 200.500h2" fill="none" strokeWidth=".8" />
          <text x="12" y="51" className="font-[Roboto] text-[8px]" fill="#16191c" stroke="none">2D</text>
        </svg>
      </div>
      <div className="absolute bottom-[50px] right-0 flex h-[59px] w-[9px] flex-col justify-end gap-px rounded-l border border-r-0 border-black bg-[#15191c] pb-1.5 pl-[3px]">
        <i className="h-px bg-[#2a8050]" /><i className="h-px bg-[#2a8050]" /><i className="h-px bg-[#2a8050]" /><i className="h-px bg-[#2a6070]" />
      </div>
    </main>
  );
}

const statusTools: { d: string; caret?: boolean; on?: boolean; tag?: string; label: string; off?: boolean }[] = [
  { label: "正交", d: "M3.500 2v12h11M3 9.500h4v5" },
  { label: "二维捕捉", d: "M4.500 2.500h9v11h-9z", caret: true, on: true, tag: "M1 0h5v5H1z" },
  { label: "三维捕捉", d: "M8 1l6 3v7l-6 4-6-4V4zM2 4l6 4 6-4M8 8v7", caret: true, on: true, tag: "M0 2h5v5H0z" },
  { label: "交点", d: "M1 1l14 14M15 1L1 15", off: true },
  { label: "极轴", d: "M12 5a6 6 0 1 0 1 3H7l6-7v12", caret: true },
  { label: "角度", d: "M15 14.500H1L14 2M5 10l2 4M4 6l3 2", caret: true },
  { label: "动态输入", d: "M1 4.500h6M4.500 1v6M7.500 10.500h8v3h-8zM8 12h7", caret: true, on: true },
  { label: "构件", d: "M1.500 1.500h13v13h-13zM4 4.500h3M9 4.500h3M4 11.500h3M9 11.500h3M5.500 4v8M10.500 4v8M5 8h6" },
  { label: "归属", d: "M2.500 2.500h5v12h-5zM7.500 6.500h7v8h-7zM9.500 1v5M9.500 1l3 4" },
];

function StatusBar() {
  return (
    <footer className="flex h-[31px] items-center whitespace-nowrap bg-[#565656]">
      <span className="w-[262px] pl-0.5">X = 9006.559 Y = 29883.804 Z = -3050</span>
      <span className="w-[86px] pl-0.5">层高:&nbsp; 3.000</span>
      <span className="w-[103px]">底标高:&nbsp; -3.050</span>
      <span className="w-[103px]">26(26)</span>
      <span className="w-[103px]">隐藏:&nbsp; 0</span>
      <div className="flex gap-[3px]">
        {statusTools.map((s) => (
          <button key={s.label} type="button" aria-label={s.label} className={`flex h-[25px] items-center justify-center gap-1 border ${s.caret ? "w-9" : "w-[25px]"} ${s.on ? "border-[#1d4680] bg-[#606264]" : "border-[#3d3f40] bg-[#4c4d4f]"}`}>
            <svg viewBox="0 0 16 16" className="size-4"><path d={s.d} fill="none" stroke={s.on ? B : s.off ? "#333" : "#151515"} />{s.tag && <path d={s.tag} fill={O} />}</svg>
            {s.caret && <Caret />}
          </button>
        ))}
        <button type="button" className="h-[25px] w-[61px] border border-[#3d3f40] bg-[#4c4d4f] text-[#181818]">折线选择</button>
      </div>
      <Combo label="工作平面" value="无工作平面" className="ml-[3px] h-[25px] w-[99px]" caretBox="right-1" />
      <span className="ml-1">先选择主构件、后选择次构件，比如：先选择钢柱，再选择需要连接的钢梁</span>
      <div className="ml-auto mr-px flex h-[27px] w-[163px] items-center justify-between rounded border-2 border-[#34485f] bg-[#606264] px-1.5 text-[#203a5c]">
        <span className="flex h-[17px] w-[17px] items-center justify-center rounded-sm bg-[#153f80] font-bold text-[#8796ac]">Q</span>
        <span className="font-bold">中</span>
        <svg viewBox="0 0 12 12" className="size-3"><path d="M7 0c6 4 4 12-4 12-2 0-3-1-3-1 6-1 8-5 7-11z" fill="currentColor" /></svg>
        <svg viewBox="0 0 12 12" className="size-3"><circle cx="3" cy="5" r="1.500" fill="none" stroke="currentColor" /><path d="M9 4v3l-1 2" stroke="currentColor" strokeWidth="2" fill="none" /></svg>
        <svg viewBox="0 0 16 12" className="h-3 w-4"><path d="M1 1.500h14v9H1zM3 4.500h10M3 6.500h10M5 8.500h6" fill="none" stroke="currentColor" /></svg>
        <svg viewBox="0 0 12 12" className="size-3"><path d="M1 6h10M6 0v12M3 3l3 6M9 3L6 9" stroke="currentColor" strokeWidth="1.300" /></svg>
        <svg viewBox="0 0 12 12" className="size-3"><path d="M1 11l6-6" stroke="currentColor" strokeWidth="3" /><path d="M9 0L6 2v4l4 0 2-3-3 1z" fill="currentColor" /></svg>
      </div>
    </footer>
  );
}

export default function App() {
  return (
    <div className="flex min-h-screen flex-col bg-[#636363] font-['Noto_Sans','Noto_Sans_CJK_SC',sans-serif] text-[12px] leading-4 text-[#0b0b0b]">
      <Header />
      <Ribbon />
      <div className="flex h-[27px] items-center gap-0.5 border-b-2 border-[#3f4142] bg-[#4c4e50] pl-0.5">
        <Combo label="楼层" value="基础层" className="h-[22px] w-[99px]" />
        <Combo label="构件大类" value="主构件" className="h-[22px] w-[98px]" />
        <Combo label="构件类型" value="钢柱" className="h-[22px] w-[98px]" />
        <Combo label="构件" value="GJ-1-GZ1" className="h-[22px] w-[98px]" />
      </div>
      <div className="flex flex-1 items-stretch">
        <TypePanel />
        <ListPanels />
        <button type="button" aria-label="折叠面板" className="h-[100px] w-1 shrink-0 self-center bg-[#24292c]" />
        <Viewport />
      </div>
      <StatusBar />
      <div className="h-5" />
    </div>
  );
}
